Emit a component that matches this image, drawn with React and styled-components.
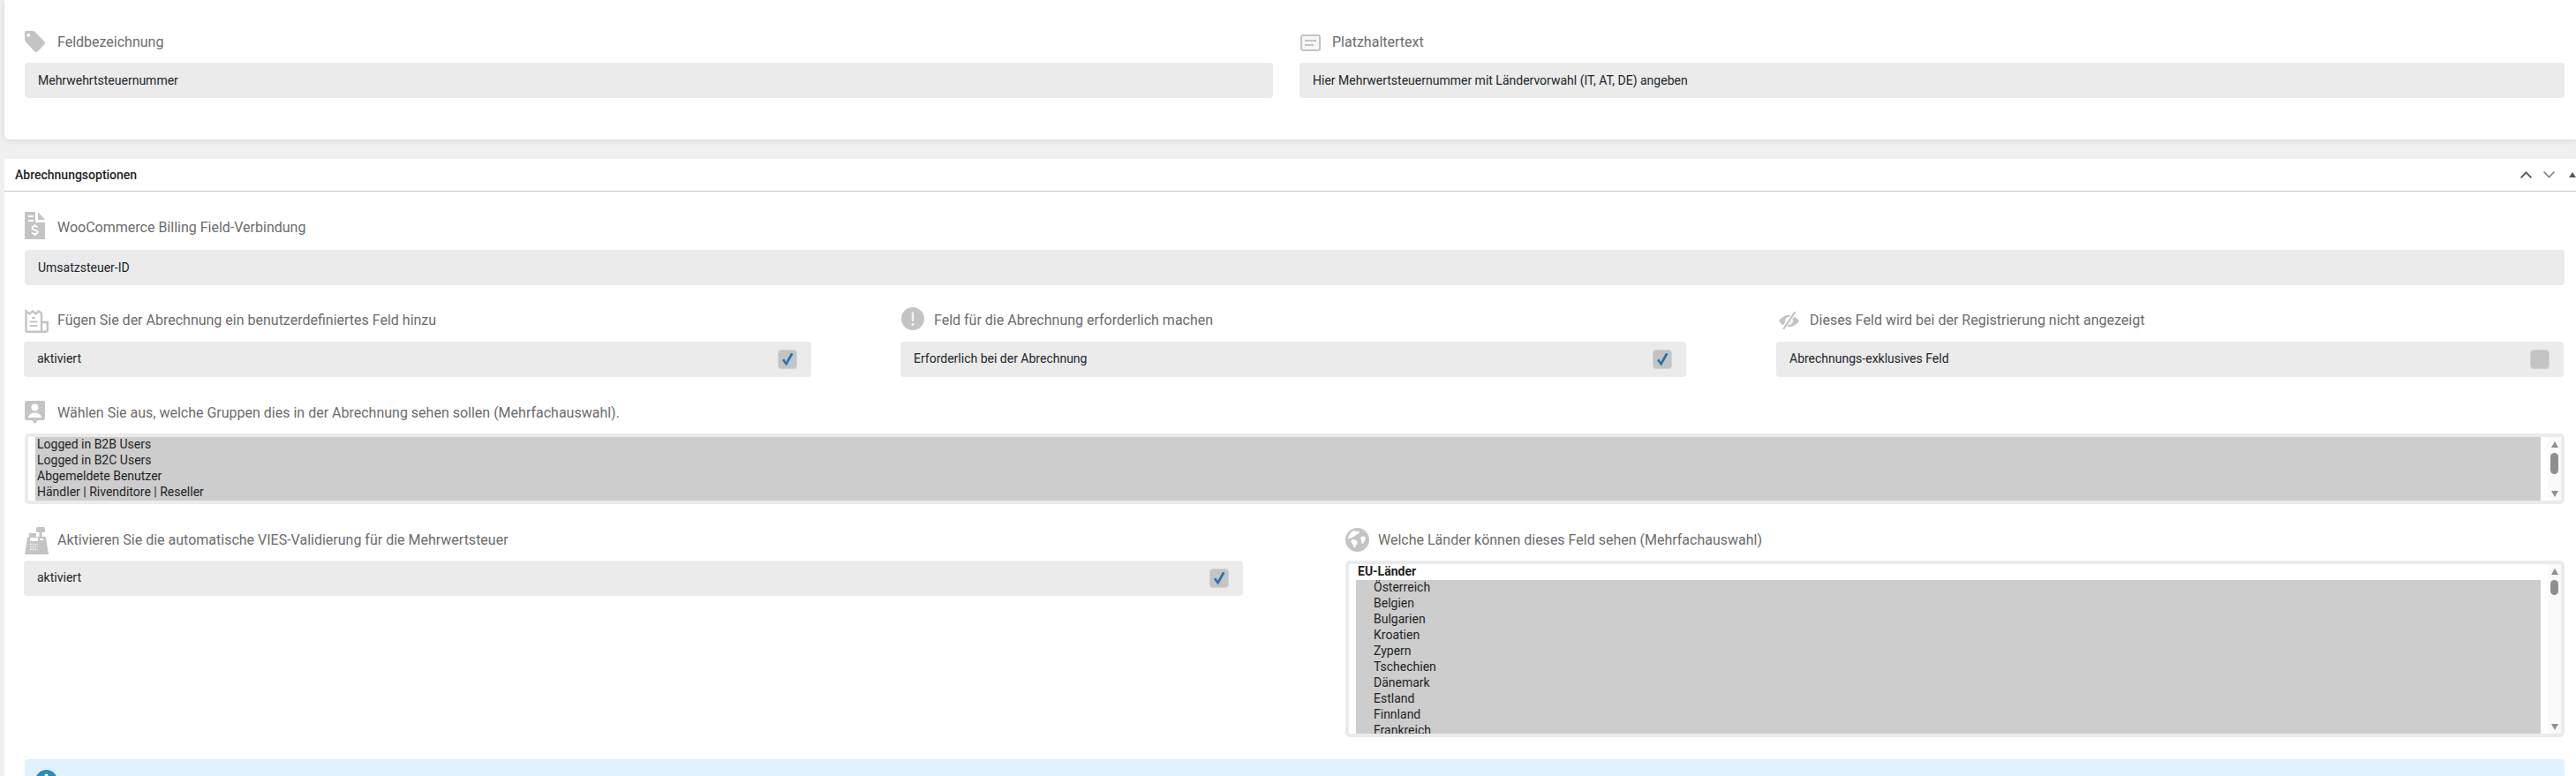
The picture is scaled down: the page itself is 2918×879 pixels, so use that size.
import React from 'react';
import styled, { createGlobalStyle } from 'styled-components';

const GlobalStyle = createGlobalStyle`
  html, body {
    margin: 0;
    height: 100%;
    overflow: hidden;
    background: #f0f0f1;
    font-family: Roboto, "Liberation Sans", sans-serif;
  }
`;

const Page = styled.div`
  padding-left: 5px;
`;

const TopCard = styled.section`
  height: 158px;
  box-sizing: border-box;
  padding: 30px 13px 0 23px;
  margin-bottom: 22px;
  background: #fff;
  border-radius: 0 0 0 5px;
  box-shadow: 0 1px 6px rgba(0, 0, 0, 0.12);
`;

const TwoColumns = styled.div`
  display: grid;
  grid-template-columns: ${(p) => p.$first} 1fr;
  column-gap: ${(p) => p.$gap};
`;

const ThreeColumns = styled.div`
  display: grid;
  grid-template-columns: 892px 890px 1fr;
  column-gap: 101px;
  margin-right: 1px;
`;

const Card = styled.section`
  background: #fff;
  border-radius: 4px 0 0 0;
`;

const CardHeader = styled.header`
  display: flex;
  align-items: center;
  height: 36px;
  padding-left: 12px;
  border-bottom: 1px solid #c3c4c7;
`;

const CardTitle = styled.h2`
  flex: 1;
  margin: 0;
  font-size: 14px;
  font-weight: 500;
  color: #1d2327;
`;

const HeaderActions = styled.div`
  display: flex;
  align-items: center;
  gap: 13px;
`;

const HeaderArrow = styled.svg`
  display: block;
  width: ${(p) => p.width}px;
  height: ${(p) => p.height}px;
  margin-left: ${(p) => p.$left || 0}px;
`;

const CardBody = styled.div`
  padding: 23px 13px 0 23px;
`;

const Section = styled.div`
  margin-top: ${(p) => p.$top || 0}px;
`;

const Field = styled.div`
  display: flex;
  flex-direction: column;
  gap: ${(p) => p.$gap || 5}px;
  min-width: 0;
`;

const LabelRow = styled.div`
  display: flex;
  align-items: flex-start;
  height: 36px;
`;

const IconSlot = styled.span`
  flex: none;
  width: ${(p) => p.$width || 37}px;
  height: 36px;
  padding-top: ${(p) => p.$top}px;
  padding-left: ${(p) => p.$left || 0}px;
  box-sizing: border-box;
  color: #c4c4c4;

  svg {
    display: block;
  }
`;

const Label = styled.label`
  font-size: 16px;
  line-height: 36px;
  color: #6c6c6c;
  white-space: nowrap;
`;

const InputBox = styled.div`
  display: flex;
  align-items: center;
  justify-content: space-between;
  height: 40px;
  box-sizing: border-box;
  padding: 0 16px 0 15px;
  margin: ${(p) => (p.$nudge ? '0 1px 0 -1px' : '0')};
  background: #ebebeb;
  border-radius: 4px;
  font-size: 14px;
  color: #22262a;
`;

const InputText = styled.span`
  margin-bottom: 2px;
`;

const CheckBox = styled.span`
  display: flex;
  align-items: center;
  justify-content: center;
  width: 22px;
  height: 22px;
  background: #c4c4c4;
  border: 1px solid #d2d2d2;
  box-sizing: border-box;
  border-radius: 4px;
`;

const ListBox = styled.div`
  display: flex;
  height: ${(p) => p.$height}px;
  box-sizing: border-box;
  background: #fff;
  border: 4px solid #ebebeb;
  border-radius: 5px;
`;

const OptionList = styled.div`
  flex: 1;
  min-width: 0;
  padding: 0 8px;
  overflow: hidden;
  font-size: 14px;
  line-height: 16px;
  color: #1f1f1f;
`;

const GroupLabel = styled.div`
  height: 18px;
  padding-left: 2px;
  font-weight: 700;
`;

const Option = styled.div`
  height: 18px;
  padding-left: ${(p) => (p.$indent ? 20 : 2)}px;
  background: #cdcdcd;
`;

const ScrollBar = styled.div`
  flex: none;
  display: flex;
  flex-direction: column;
  align-items: center;
  width: 15px;
  padding: 5px 0 4px;
  box-sizing: border-box;
  background: #fafafa;
`;

const ScrollArrow = styled.span`
  width: 0;
  height: 0;
  border-left: 4.5px solid transparent;
  border-right: 4.5px solid transparent;
  border-${(p) => (p.$down ? 'top' : 'bottom')}: 7px solid #8f8f8f;
  margin-top: ${(p) => (p.$down ? 'auto' : '0')};
`;

const ScrollThumb = styled.span`
  width: 9px;
  height: ${(p) => p.$height}px;
  margin-top: 6px;
  background: #8f8f8f;
  border-radius: 4.5px;
`;

const InfoBox = styled.div`
  display: flex;
  height: 70px;
  margin-top: 25px;
  padding: 12px 15px 0 12px;
  box-sizing: border-box;
  background: #e0f2fd;
  border-radius: 4px;
`;

const grey = 'currentColor';

const TagIcon = () => (
  <svg width="23" height="24" viewBox="0 0 23 24">
    <path fill={grey} d="M2 0h7.6c.8 0 1.5.3 2 .9l10.6 11c1 1 1 2.6 0 3.5l-7.5 7.8c-1 1-2.5 1-3.5 0L.8 12C.3 11.500 0 10.800 0 10V2C0 .9.900 0 2 0z" />
    <circle cx="4.200" cy="4.800" r="1.900" fill="#fff" />
  </svg>
);

const NoteIcon = () => (
  <svg width="23" height="19" viewBox="0 0 23 19">
    <rect x="1" y="1" width="21" height="17" rx="2" fill="#f6f6f6" stroke={grey} strokeWidth="2" />
    <rect x="5" y="6" width="13" height="2" fill={grey} />
    <rect x="5" y="11" width="10" height="2" fill={grey} />
  </svg>
);

const InvoiceIcon = () => (
  <svg width="23" height="31" viewBox="0 0 23 31">
    <path fill={grey} d="M0 1a1 1 0 0 1 1-1h11v12h11v18a1 1 0 0 1-1 1H1a1 1 0 0 1-1-1z" />
    <path fill={grey} d="M15 0l8 9h-8z" />
    <rect x="4" y="4" width="6" height="2" fill="#fff" />
    <rect x="4" y="9" width="6" height="2" fill="#fff" />
    <path fill="none" stroke="#fff" strokeWidth="1.800" d="M14.500 17.500c-.6-.9-1.700-1.300-3-1.300-1.700 0-3 .8-3 2.200 0 2.900 6.200 1.500 6.200 4.400 0 1.400-1.400 2.200-3.200 2.200-1.400 0-2.600-.5-3.200-1.500" />
    <path stroke="#fff" strokeWidth="1.600" d="M11.500 14v2M11.500 25v2" />
  </svg>
);

const ReceiptIcon = () => (
  <svg width="27" height="27" viewBox="0 0 27 27">
    <path fill="none" stroke={grey} strokeWidth="2.400" d="M1.500 2.500l4 3 3.500-3 3.500 3 3.500-3 3 2.500V24c0 1-.6 1.700-1.500 1.700H3c-1 0-1.500-.7-1.500-1.700z" />
    <path fill="none" stroke={grey} strokeWidth="2.400" d="M19 15h6.800v8.500c0 1.300-.9 2.200-2.200 2.200H18" />
    <rect x="8" y="9" width="4" height="2" fill={grey} />
    <rect x="5.500" y="13.500" width="9" height="2" fill={grey} />
    <rect x="5.500" y="18" width="9" height="2" fill={grey} />
  </svg>
);

const AlertIcon = () => (
  <svg width="26" height="26" viewBox="0 0 26 26">
    <circle cx="13" cy="13" r="13" fill={grey} />
    <rect x="11.800" y="5.500" width="2.400" height="10.500" rx="1" fill="#f4f4f4" />
    <circle cx="13" cy="19.500" r="1.500" fill="#f4f4f4" />
  </svg>
);

const HiddenIcon = () => (
  <svg width="23" height="20" viewBox="0 0 23 20">
    <path fill={grey} d="M0 10.500C2.800 6.300 6.800 4 11.500 4s8.700 2.300 11.500 6.500C20.200 14.700 16.200 17 11.500 17S2.800 14.700 0 10.500z" />
    <circle cx="11.500" cy="10.500" r="4.400" fill="#fff" />
    <circle cx="11.500" cy="10.500" r="2.600" fill={grey} />
    <path stroke="#fff" strokeWidth="4.400" d="M4.500 19.500L18.500.5" />
    <path stroke={grey} strokeWidth="2.200" d="M5 20L18.500 0" />
  </svg>
);

const GroupIcon = () => (
  <svg width="23" height="26" viewBox="0 0 23 26">
    <path fill={grey} d="M2 0h19a2 2 0 0 1 2 2v18a2 2 0 0 1-2 2h-6l-3.500 4L8 22H2a2 2 0 0 1-2-2V2a2 2 0 0 1 2-2z" />
    <circle cx="11.500" cy="7.500" r="4" fill="#fff" />
    <path fill="#fff" d="M4 19c.6-3.600 3.600-5.500 7.500-5.500S18.400 15.400 19 19z" />
  </svg>
);

const RegisterIcon = () => (
  <svg width="27" height="31" viewBox="0 0 27 31">
    <rect x="13" y="0" width="10" height="6" rx="1.500" fill={grey} />
    <rect x="16.500" y="5" width="3" height="6" fill={grey} />
    <path fill={grey} d="M5 7h8v4h9.500c.8 0 1.300.5 1.500 1.200L27 31H0L3 12.200C3.200 11.500 3.800 11 4.500 11H5z" />
    <rect x="6" y="12" width="9" height="4" fill="#fff" />
    <rect x="17" y="13" width="4" height="2" fill="#fff" />
    <path stroke="#fff" strokeWidth="1.400" strokeDasharray="1.400 1.400" d="M6 19.500h9M6 22.500h9M6 25.500h9" />
  </svg>
);

const GlobeIcon = () => (
  <svg width="27" height="27" viewBox="0 0 27 27">
    <circle cx="13.500" cy="13.500" r="13.500" fill={grey} />
    <path fill="#fff" d="M9 3c2 1 4 .5 6 .8 1.200.2 1.500 1.700.3 2.300-1.300.6-1.800 1.700-3 1.900-1 .2-1.300 1.400-2.400 1.600-1.300.3-1.500 1.700-3.200 1.600C5.300 11.100 4.700 12.400 3 12.500c.3-3.900 2.800-7.600 6-9.500z" />
    <path fill="#fff" d="M8 13.500c2.200-.6 4.700.3 5.600 2 .7 1.400-.4 2.500-1.200 3.500-.8 1.100-.5 3-1.700 3.500-1.700-.6-1.800-3-2.500-4.300-.7-1.200-2.200-1.900-1.900-3 .2-.9.900-1.500 1.700-1.700z" />
    <path fill="#fff" d="M18 10c1.300-.5 3.200-.6 4.300.2.700 1.300.2 3.600-.8 5.100-.7 1-1 2.900-2.200 2.600-1-.4-.9-2.300-1.300-3.500-.5-1.400-1.300-3.600 0-4.400z" />
  </svg>
);

const Tick = () => (
  <svg width="14" height="16" viewBox="0 0 14 16">
    <path fill="#2271b1" d="M1 9l2.300-1.500 2 3.400L11 .8 13.500 2 5.800 15.500z" />
  </svg>
);

const FieldLabel = ({ icon, top, left, width, children }) => (
  <LabelRow>
    <IconSlot $top={top} $left={left} $width={width}>
      {icon}
    </IconSlot>
    <Label>{children}</Label>
  </LabelRow>
);

const Scroll = ({ thumb }) => (
  <ScrollBar>
    <ScrollArrow />
    <ScrollThumb $height={thumb} />
    <ScrollArrow $down />
  </ScrollBar>
);

const groups = ['Logged in B2B Users', 'Logged in B2C Users', 'Abgemeldete Benutzer', 'Händler | Rivenditore | Reseller'];
const countries = ['Österreich', 'Belgien', 'Bulgarien', 'Kroatien', 'Zypern', 'Tschechien', 'Dänemark', 'Estland', 'Finnland', 'Frankreich'];

export default function App() {
  return (
    <Page>
      <GlobalStyle />
      <TopCard>
        <TwoColumns $first="1414px" $gap="30px">
          <Field>
            <FieldLabel icon={<TagIcon />} top={5}>Feldbezeichnung</FieldLabel>
            <InputBox>Mehrwehrtsteuernummer</InputBox>
          </Field>
          <Field>
            <FieldLabel icon={<NoteIcon />} top={9} left={1}>Platzhaltertext</FieldLabel>
            <InputBox>Hier Mehrwertsteuernummer mit Ländervorwahl (IT, AT, DE) angeben</InputBox>
          </Field>
        </TwoColumns>
      </TopCard>

      <Card>
        <CardHeader>
          <CardTitle>Abrechnungsoptionen</CardTitle>
          <HeaderActions>
            <HeaderArrow width="13" height="8" viewBox="0 0 13 8">
              <path fill="none" stroke="#50575e" strokeWidth="1.800" d="M.6 7.400l5.900-6 5.900 6" />
            </HeaderArrow>
            <HeaderArrow width="13" height="8" viewBox="0 0 13 8">
              <path fill="none" stroke="#8c8f94" strokeWidth="1.800" d="M.6.600l5.900 6 5.900-6" />
            </HeaderArrow>
            <HeaderArrow width="8" height="6" viewBox="0 0 8 6" $left={3}>
              <path fill="#50575e" d="M4 0l4 6H0z" />
            </HeaderArrow>
          </HeaderActions>
        </CardHeader>

        <CardBody>
          <Field $gap={7}>
            <FieldLabel icon={<InvoiceIcon />} top={0}>WooCommerce Billing Field-Verbindung</FieldLabel>
            <InputBox>Umsatzsteuer-ID</InputBox>
          </Field>

          <Section $top={22}>
            <ThreeColumns>
              <Field $gap={6}>
                <FieldLabel icon={<ReceiptIcon />} top={5}>Fügen Sie der Abrechnung ein benutzerdefiniertes Feld hinzu</FieldLabel>
                <InputBox $nudge>
                  <InputText>aktiviert</InputText>
                  <CheckBox><Tick /></CheckBox>
                </InputBox>
              </Field>
              <Field $gap={6}>
                <FieldLabel icon={<AlertIcon />} top={3}>Feld für die Abrechnung erforderlich machen</FieldLabel>
                <InputBox $nudge>
                  <InputText>Erforderlich bei der Abrechnung</InputText>
                  <CheckBox><Tick /></CheckBox>
                </InputBox>
              </Field>
              <Field $gap={6}>
                <FieldLabel icon={<HiddenIcon />} top={8} left={3} width={38}>Dieses Feld wird bei der Registrierung nicht angezeigt</FieldLabel>
                <InputBox>
                  <InputText>Abrechnungs-exklusives Feld</InputText>
                  <CheckBox />
                </InputBox>
              </Field>
            </ThreeColumns>
          </Section>

          <Section $top={23}>
            <Field>
              <FieldLabel icon={<GroupIcon />} top={4}>Wählen Sie aus, welche Gruppen dies in der Abrechnung sehen sollen (Mehrfachauswahl).</FieldLabel>
              <ListBox $height={80}>
                <OptionList>
                  {groups.map((name) => (
                    <Option key={name}>{name}</Option>
                  ))}
                </OptionList>
                <Scroll thumb={24} />
              </ListBox>
            </Field>
          </Section>

          <Section $top={23}>
            <TwoColumns $first="1381px" $gap="115px">
              <Field>
                <FieldLabel icon={<RegisterIcon />} top={3}>Aktivieren Sie die automatische VIES-Validierung für die Mehrwertsteuer</FieldLabel>
                <InputBox $nudge>
                  <InputText>aktiviert</InputText>
                  <CheckBox><Tick /></CheckBox>
                </InputBox>
              </Field>
              <Field>
                <FieldLabel icon={<GlobeIcon />} top={4}>Welche Länder können dieses Feld sehen (Mehrfachauswahl)</FieldLabel>
                <ListBox $height={200}>
                  <OptionList>
                    <GroupLabel>EU-Länder</GroupLabel>
                    {countries.map((name) => (
                      <Option key={name} $indent>{name}</Option>
                    ))}
                  </OptionList>
                  <Scroll thumb={17} />
                </ListBox>
              </Field>
            </TwoColumns>
          </Section>

          <InfoBox>
            <svg width="25" height="25" viewBox="0 0 25 25">
              <circle cx="12.500" cy="12.500" r="12.500" fill="#2b8cbe" />
              <circle cx="12.500" cy="6.500" r="2" fill="#fff" />
              <rect x="10.800" y="10" width="3.400" height="10" fill="#fff" />
            </svg>
          </InfoBox>
        </CardBody>
      </Card>
    </Page>
  );
}
